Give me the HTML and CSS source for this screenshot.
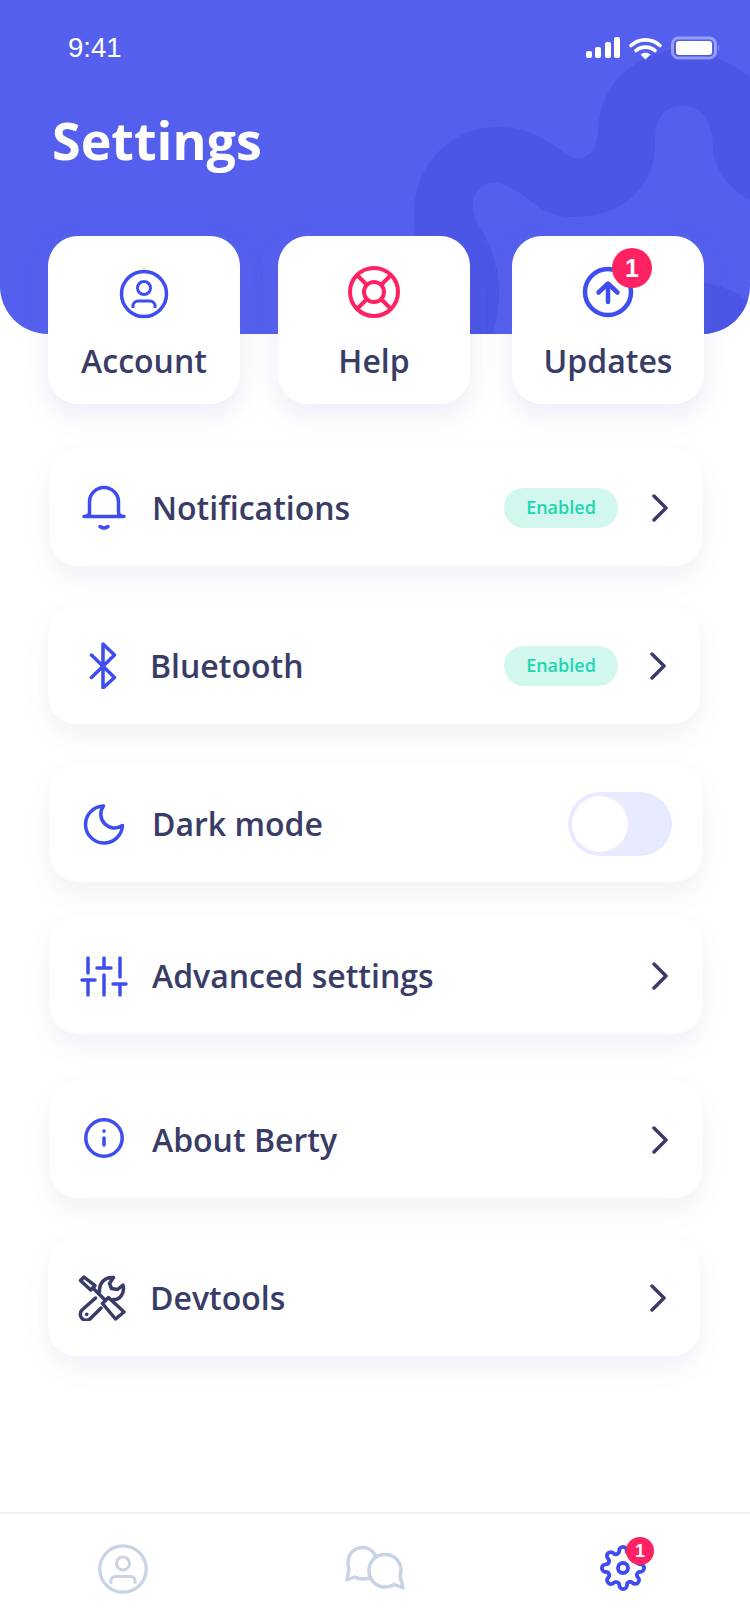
FILE: index.html
```html
<!DOCTYPE html>
<html lang="en">
<head>
  <meta charset="UTF-8" />
  <meta name="viewport" content="width=device-width, initial-scale=1.0" />
  <title>Settings</title>
  <link rel="stylesheet" href="styles.css">
</head>
<body>
  <header class="hero">
    <svg class="hero-blob" width="750" height="334" viewBox="0 0 750 334">
      <path d="M750 77C720 55 690 45 670 50C625 60 600 90 598 130C597 150 590 158 577 158C562 158 545 127 498 127C450 127 414 165 414 215C414 260 430 300 430 334L493 334C505 290 498 260 483 233C472 215 468 200 480 188C495 175 515 190 526 197C545 215 560 217 574 217C620 217 655 190 655 143C655 115 665 106 684 106C705 106 713 125 713 150C715 170 730 190 750 200Z" />
      <path d="M690 282C715 282 735 290 750 303L750 334L690 334Z" />
    </svg>
    <div class="status">
      <span class="status-time">9:41</span>
      <svg class="status-icons" width="134" height="24" viewBox="0 0 134 24">
        <rect x="1" y="15" width="6" height="7" rx="2" fill="#fff" />
        <rect x="10" y="11" width="6" height="11" rx="2" fill="#fff" />
        <rect x="20" y="6" width="6" height="16" rx="2" fill="#fff" />
        <rect x="29" y="1" width="6" height="21" rx="2" fill="#fff" />
        <path d="M46 9.5C54 2 67 2 75 9.5" fill="none" stroke="#fff" stroke-width="3.6" stroke-linecap="round" />
        <path d="M51 14.5C56 10 65 10 70 14.5" fill="none" stroke="#fff" stroke-width="3.6" stroke-linecap="round" />
        <path d="M55.5 18.5C58.5 16 62.5 16 65.5 18.5L60.5 23.5Z" fill="#fff" />
        <rect x="87.5" y="2" width="43" height="20" rx="6" fill="none" stroke="#fff" stroke-opacity="0.4" stroke-width="3" />
        <rect x="91" y="5" width="36" height="14" rx="3" fill="#fff" />
        <path d="M133 9C134 10 134 14 133 15Z" fill="#fff" fill-opacity="0.4" />
      </svg>
    </div>
    <h1 class="hero-title">Settings</h1>
  </header>

  <main>
    <section class="shortcuts">
      <div class="shortcut">
        <svg class="shortcut-icon" width="56" height="56" viewBox="0 0 56 56" fill="none" stroke="#3f4cf0" stroke-width="3.5">
          <circle cx="28" cy="28" r="22.5" />
          <circle cx="28" cy="22" r="6.5" stroke-width="3" />
          <path d="M17 42V40a5 5 0 0 1 5-5H34a5 5 0 0 1 5 5V42" stroke-width="3" />
        </svg>
        <span>Account</span>
      </div>
      <div class="shortcut">
        <svg class="shortcut-icon" width="56" height="56" viewBox="0 0 56 56" fill="none" stroke="#ff2263" stroke-width="4">
          <circle cx="28" cy="26" r="24" />
          <circle cx="28" cy="26" r="10" />
          <path d="M21 19L11 9M35 19L45 9M21 33L11 43M35 33L45 43" />
        </svg>
        <span>Help</span>
      </div>
      <div class="shortcut shortcut-last">
        <svg class="shortcut-icon" width="56" height="56" viewBox="0 0 56 56" fill="none" stroke="#3f4cf0" stroke-width="4.5" stroke-linecap="round" stroke-linejoin="round">
          <circle cx="28" cy="26" r="23" />
          <path d="M28 36V18M18.500 26.500L28 17.500L37.500 26.500" />
        </svg>
        <span>Updates</span>
        <span class="badge">1</span>
      </div>
    </section>

    <section class="rows">
      <div class="row">
        <svg class="row-icon" width="48" height="48" viewBox="0 0 48 48" fill="none" stroke="#3f4cf0" stroke-width="3.5" stroke-linecap="round" stroke-linejoin="round">
          <path d="M9.5 33.5V19A14.5 14.5 0 0 1 38.5 19V29C38.5 32 40 33.5 44 33.5H4C8 33.5 9.5 32 9.5 29" />
          <path d="M20 43.5Q24 46.5 28 43.5" />
        </svg>
        <span class="row-label">Notifications</span>
        <span class="pill">Enabled</span>
        <svg class="chevron" width="16" height="28" viewBox="0 0 16 28"><path d="M2 2L14 14L2 26" /></svg>
      </div>

      <div class="row row-inset">
        <svg class="row-icon" width="48" height="48" viewBox="0 0 48 48" fill="none" stroke="#3f4cf0" stroke-width="3.5" stroke-linecap="round" stroke-linejoin="round">
          <path d="M13.5 14L36.5 36.5L25 47V3L36.5 14L13.5 36.5" />
        </svg>
        <span class="row-label">Bluetooth</span>
        <span class="pill">Enabled</span>
        <svg class="chevron" width="16" height="28" viewBox="0 0 16 28"><path d="M2 2L14 14L2 26" /></svg>
      </div>

      <div class="row">
        <svg class="row-icon" width="48" height="48" viewBox="0 0 48 48" fill="none" stroke="#3f4cf0" stroke-width="3.5" stroke-linecap="round" stroke-linejoin="round">
          <path d="M23.5 7A18.5 18.5 0 1 0 42.5 26.5A13.800 13.800 0 0 1 23.5 7Z" />
        </svg>
        <span class="row-label">Dark mode</span>
        <div class="toggle"><div class="toggle-knob"></div></div>
      </div>

      <div class="row row-tight">
        <svg class="row-icon" width="48" height="48" viewBox="0 0 48 48" fill="none" stroke="#3f4cf0" stroke-width="3.5" stroke-linecap="round">
          <path d="M8 7V22M2 29H15M8 29V44" />
          <path d="M24 7V17M17 17H31M24 24V44" />
          <path d="M40 7V26M33 33H46M40 33V44" />
        </svg>
        <span class="row-label">Advanced settings</span>
        <svg class="chevron chevron-end" width="16" height="28" viewBox="0 0 16 28"><path d="M2 2L14 14L2 26" /></svg>
      </div>

      <div class="row row-loose">
        <svg class="row-icon" width="48" height="48" viewBox="0 0 48 48" fill="none" stroke="#3f4cf0" stroke-width="3.5" stroke-linecap="round">
          <circle cx="24" cy="23" r="18.2" />
          <path d="M24 23V30M24 16V16.2" />
        </svg>
        <span class="row-label">About Berty</span>
        <svg class="chevron chevron-end" width="16" height="28" viewBox="0 0 16 28"><path d="M2 2L14 14L2 26" /></svg>
      </div>

      <div class="row row-inset">
        <svg class="row-icon" width="48" height="48" viewBox="0 0 48 48" fill="none" stroke="#393c66" stroke-width="3.5" stroke-linecap="round" stroke-linejoin="round">
          <path d="M2.500 7.500L6 4L17 12.700L12.700 17Z" />
          <path d="M15 15L27 27" />
          <path d="M24.500 30.500L30.500 24.500L46 39L37.500 46Z" />
          <path d="M17.500 25L4 37a6 6 0 0 0 8.500 8.500L23 35" />
          <path d="M21.500 18.500C21 10 27 3.500 35.500 4.500L31.500 10.500L33.500 15.500L39.500 16.500L45 12C47 20 42 27 35 26.500" />
          <path d="M8.700 41.300V41.400" />
        </svg>
        <span class="row-label">Devtools</span>
        <svg class="chevron chevron-end" width="16" height="28" viewBox="0 0 16 28"><path d="M2 2L14 14L2 26" /></svg>
      </div>
    </section>
  </main>

  <nav class="tabs">
    <div class="tab">
      <svg width="52" height="52" viewBox="0 0 56 56" fill="none" stroke="#c8d3e6" stroke-width="3.5">
        <circle cx="28" cy="28" r="25" />
        <circle cx="28" cy="22" r="7" stroke-width="3.2" />
        <path d="M15 44V41a5 5 0 0 1 5-5H36a5 5 0 0 1 5 5V44" stroke-width="3.2" />
      </svg>
    </div>
    <div class="tab">
      <svg width="64" height="48" viewBox="0 0 64 48" fill="none" stroke="#c8d3e6" stroke-width="3.5" stroke-linecap="round" stroke-linejoin="round">
        <path d="M33 12C30 5.500 26 2.500 20 2.500C11 2.500 5 9 5 18C5 20 5.400 22 6 24L4 35L11.500 32C14 33.500 17 34 20 34C22 34 24.500 33.700 26.500 33" />
        <path d="M42 9.500C51 9.500 58 16 58 25.500C58 28 57.600 29.500 57 31L60 43L51.500 39.500C49 41 46 42 42 42C33 42 26 35 26 25.500C26 16 33 9.500 42 9.500Z" />
      </svg>
    </div>
    <div class="tab tab-gear">
      <svg width="46" height="46" viewBox="0 0 24 24" fill="none" stroke="#3f4cf0" stroke-width="2" stroke-linecap="round" stroke-linejoin="round">
        <circle cx="12" cy="12" r="2.600" />
        <path d="M19.4 15a1.65 1.65 0 0 0 .33 1.82l.06.06a2 2 0 0 1 0 2.83 2 2 0 0 1-2.83 0l-.06-.06a1.65 1.65 0 0 0-1.82-.33 1.65 1.65 0 0 0-1 1.51V21a2 2 0 0 1-2 2 2 2 0 0 1-2-2v-.09A1.65 1.65 0 0 0 9 19.4a1.65 1.65 0 0 0-1.82.33l-.06.06a2 2 0 0 1-2.83 0 2 2 0 0 1 0-2.83l.06-.06a1.65 1.65 0 0 0 .33-1.82 1.65 1.65 0 0 0-1.51-1H3a2 2 0 0 1-2-2 2 2 0 0 1 2-2h.09A1.65 1.65 0 0 0 4.6 9a1.65 1.65 0 0 0-.33-1.82l-.06-.06a2 2 0 0 1 0-2.83 2 2 0 0 1 2.83 0l.06.06a1.65 1.65 0 0 0 1.82.33H9a1.65 1.65 0 0 0 1-1.51V3a2 2 0 0 1 2-2 2 2 0 0 1 2 2v.09a1.65 1.65 0 0 0 1 1.51 1.65 1.65 0 0 0 1.82-.33l.06-.06a2 2 0 0 1 2.83 0 2 2 0 0 1 0 2.83l-.06.06a1.65 1.65 0 0 0-.33 1.82V9a1.65 1.65 0 0 0 1.51 1H21a2 2 0 0 1 2 2 2 2 0 0 1-2 2h-.09a1.65 1.65 0 0 0-1.51 1z" />
      </svg>
      <span class="tab-badge">1</span>
    </div>
  </nav>
</body>
</html>
```

FILE: styles.css
```css
body {
  margin: 0;
  height: 1624px;
  display: flex;
  flex-direction: column;
  overflow: hidden;
  font-family: "Open Sans", sans-serif;
  background-color: #fff;
  color: #393c66;
}
main {
  flex: 1;
}
.hero {
  position: relative;
  height: 334px;
  overflow: hidden;
  background-color: #545fee;
  border-radius: 0 0 48px 48px;
}
.hero-blob {
  position: absolute;
  left: 0;
  top: 0;
  fill: #4b56e6;
}
.status {
  position: relative;
  display: flex;
  justify-content: space-between;
  align-items: center;
  padding: 33px 31px 0 68px;
}
.status-time {
  font-family: "Liberation Sans", sans-serif;
  font-size: 27.5px;
  line-height: 30px;
  color: #fff;
}
.hero-title {
  position: relative;
  margin: 44px 0 0 52px;
  font-size: 52px;
  line-height: 66px;
  font-weight: 700;
  color: #fff;
}
.shortcuts {
  position: relative;
  display: flex;
  gap: 38px;
  margin-top: -98px;
  padding-left: 48px;
}
.shortcut {
  position: relative;
  box-sizing: border-box;
  width: 192px;
  height: 168px;
  padding-top: 30px;
  display: flex;
  flex-direction: column;
  align-items: center;
  background: #fff;
  border-radius: 30px;
  box-shadow: 0 10px 28px rgba(110, 120, 200, 0.14);
  font-size: 32px;
  line-height: 44px;
  font-weight: 600;
}
.shortcut-last {
  margin-left: 4px;
}
.shortcut-icon {
  display: block;
  margin-bottom: 17px;
}
.badge {
  position: absolute;
  left: 100px;
  top: 12px;
  width: 40px;
  height: 40px;
  border-radius: 50%;
  background-color: #ff2263;
  color: #fff;
  font-family: "Liberation Sans", sans-serif;
  font-size: 25px;
  line-height: 40px;
  font-weight: 700;
  text-align: center;
}
.rows {
  margin-top: 44px;
}
.row {
  box-sizing: border-box;
  width: 652px;
  height: 118px;
  margin: 40px 0 0 50px;
  padding: 2px 34px 0 0;
  display: flex;
  align-items: center;
  background: #fff;
  border-radius: 28px;
  box-shadow: 0 12px 26px rgba(80, 90, 170, 0.08);
}
.row:first-child {
  margin-top: 0;
}
.row-inset {
  margin-left: 48px;
}
.row-tight {
  margin-top: 34px;
}
.row-loose {
  margin-top: 46px;
}
.row-icon {
  flex: none;
  margin: -2px 24px 0 30px;
}
.row-label {
  font-size: 32px;
  line-height: 44px;
  font-weight: 600;
}
.pill {
  margin: 0 34px 0 auto;
  width: 114px;
  height: 40px;
  border-radius: 20px;
  background-color: #d2f7ef;
  color: #20d6b0;
  font-size: 18px;
  line-height: 38px;
  font-weight: 600;
  text-align: center;
}
.row-inset .pill {
  margin-right: 32px;
}
.chevron {
  flex: none;
  fill: none;
  stroke: #393c66;
  stroke-width: 3.5;
  stroke-linecap: round;
  stroke-linejoin: round;
}
.chevron-end {
  margin-left: auto;
}
.toggle {
  margin: 0 -4px 0 auto;
  width: 104px;
  height: 64px;
  box-sizing: border-box;
  padding: 4px;
  border-radius: 32px;
  background-color: #e8ebff;
}
.toggle-knob {
  width: 56px;
  height: 56px;
  border-radius: 50%;
  background-color: #fff;
}
.tabs {
  height: 110px;
  display: grid;
  grid-template-columns: 246px 258px 238px;
  align-items: center;
  justify-items: center;
  border-top: 2px solid #edf1f6;
}
.tab {
  position: relative;
  display: flex;
}
.tab-gear {
  margin-bottom: 2px;
}
.tab-badge {
  position: absolute;
  left: 26px;
  top: -8px;
  width: 28px;
  height: 28px;
  border-radius: 50%;
  background-color: #ff2263;
  color: #fff;
  font-family: "Liberation Sans", sans-serif;
  font-size: 18px;
  line-height: 28px;
  font-weight: 700;
  text-align: center;
}
```
